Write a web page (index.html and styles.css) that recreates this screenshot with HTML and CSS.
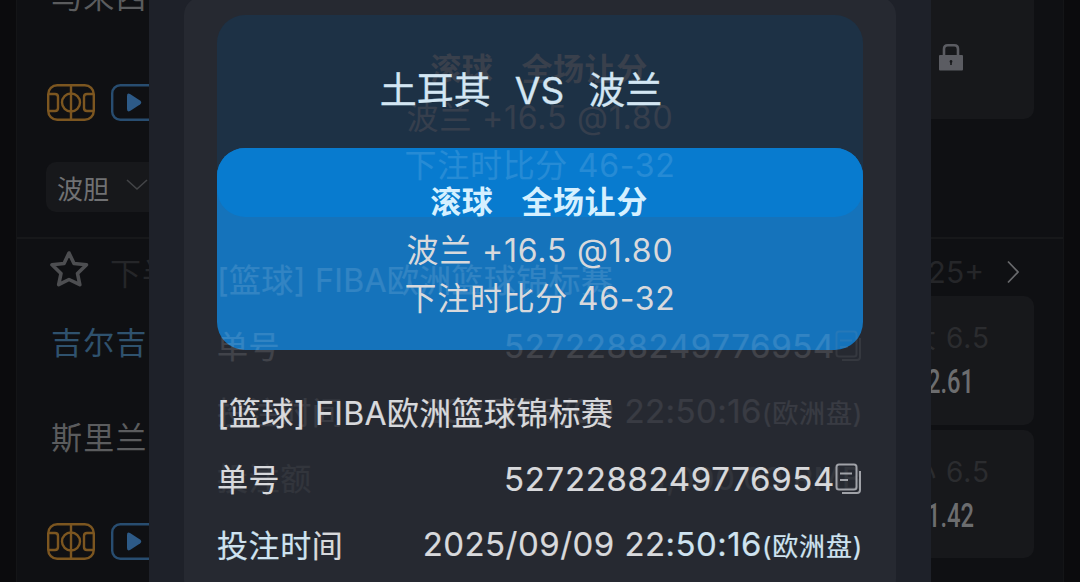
FILE: index.html
```html
<!DOCTYPE html>
<html lang="zh-CN">
<head>
    <meta charset="UTF-8">
    <title>注单详情</title>
    <link rel="stylesheet" href="styles.css">
</head>
<body>
    <svg width="0" height="0" class="defs">
        <symbol id="icon-pitch" viewBox="0 0 48 37">
            <rect x="1.2" y="1.2" width="45.6" height="34.6" rx="9"/>
            <path d="M24 1v35M1 10h7q3 0 3 3v11q0 3-3 3H1M47 10h-7q-3 0-3 3v11q0 3 3 3h7"/>
            <circle cx="24" cy="18.5" r="9"/>
        </symbol>
        <symbol id="icon-play" viewBox="0 0 48 37">
            <rect x="1.2" y="1.2" width="45.6" height="34.6" rx="8"/>
            <path class="solid" d="M16 12q0-3.5 3-2l10 6.500q2.500 2 0 4l-10 6.500q-3 1.500-3-2z"/>
        </symbol>
        <symbol id="icon-copy" viewBox="0 0 28 32">
            <rect x="1.5" y="1.5" width="20" height="25" rx="2.5"/>
            <path d="M5 10.5h12M5 17h8M25 8v19q0 3-3 3H7"/>
        </symbol>
    </svg>

    <div class="board">
        <div class="match first">
            <div class="left">
                <div class="team top">马来西</div>
                <div class="icons">
                    <svg class="pitch"><use href="#icon-pitch"/></svg>
                    <svg class="play"><use href="#icon-play"/></svg>
                </div>
                <div class="select">波胆
                    <svg width="22" height="12" viewBox="0 0 22 12"><path d="M1 1l10 9 10-9"/></svg>
                </div>
            </div>
            <div class="right">
                <div class="odds locked">
                    <svg class="lock" width="24" height="27" viewBox="0 0 24 27">
                        <path class="shackle" d="M5 12V5q0-3.7 3.7-3.7h6.6q3.7 0 3.7 3.7v7"/>
                        <rect y="11" width="24" height="15.5" rx="1"/>
                        <path class="hole" d="M12 16a1.5 1.5 0 0 1 .8 2.7v2.3h-1.6v-2.3a1.5 1.5 0 0 1 .8-2.7z"/>
                    </svg>
                </div>
            </div>
        </div>

        <div class="match">
            <div class="left">
                <div class="bar">
                    <svg class="star" width="42" height="38" viewBox="0 0 42 38"><path d="M21 4l5 10.5 12.500 1.300-9 8.700 2.300 11.200L21 30.500 10.700 35.700l2.300-11.200-9-8.700L16 14.500z"/></svg>
                    <span>下半</span>
                </div>
                <div class="team home">吉尔吉</div>
                <div class="team away">斯里兰</div>
                <div class="icons">
                    <svg class="pitch"><use href="#icon-pitch"/></svg>
                    <svg class="play"><use href="#icon-play"/></svg>
                </div>
            </div>
            <div class="right">
                <div class="bar more">25+
                    <svg width="12" height="24" viewBox="0 0 12 24"><path d="M1 1.5l10 10.5L1 22.5"/></svg>
                </div>
                <div class="odds">
                    <div class="line">大 6.5</div>
                    <div class="price">2.61</div>
                </div>
                <div class="odds">
                    <div class="line">小 6.5</div>
                    <div class="price">1.42</div>
                </div>
            </div>
        </div>
    </div>

    <div class="modal">
        <div class="panel">
            <!-- previous frame, fading out behind the ticket -->
            <div class="plate"></div>
            <div class="ticket">
                <div class="title"><span>土耳其</span><span class="vs">VS</span><span>波兰</span></div>
                <div class="card">
                    <div class="kind"><span>滚球</span><span>全场让分</span></div>
                    <div class="pick">波兰 +16.5 @1.80</div>
                    <div class="score">下注时比分 46-32</div>
                </div>
                <div class="row"><span class="league">[篮球] FIBA欧洲篮球锦标赛</span></div>
                <div class="row">
                    <span>单号</span>
                    <span class="value number">5272288249776954<svg class="copy"><use href="#icon-copy"/></svg></span>
                </div>
                <div class="row">
                    <span><span class="tint">投注时</span>间</span>
                    <span class="value time"><span>2025/09/09 22<span class="tint">:50:16<small>(欧洲盘)</small></span></span></span>
                </div>
            </div>
            <div class="ticket ghost">
                <div class="card">
                    <div class="kind"><span>滚球</span><span>全场让分</span></div>
                    <div class="pick">波兰 +16.5 @1.80</div>
                    <div class="score">下注时比分 46-32</div>
                </div>
                <div class="row"><span class="league">[篮球] FIBA欧洲篮球锦标赛</span></div>
                <div class="row">
                    <span>单号</span>
                    <span class="value number">5272288249776954<svg class="copy"><use href="#icon-copy"/></svg></span>
                </div>
                <div class="row faint">
                    <span>投注时间</span>
                    <span class="value time"><span>2025/09/09 22:50:16<small>(欧洲盘)</small></span></span>
                </div>
                <div class="row fainter">
                    <span>投注额</span>
                    <span class="value amount">1,000.00 RMB</span>
                </div>
            </div>
        </div>
    </div>
</body>
</html>
```

FILE: styles.css
```css
* {
    box-sizing: border-box;
}
body {
    margin: 0;
    height: 582px;
    position: relative;
    overflow: hidden;
    background-color: #0b0b0d;
    font-family: Inter, "Noto Sans CJK SC", sans-serif;
    white-space: nowrap;
}
svg {
    fill: none;
    flex-shrink: 0;
}
.defs {
    position: absolute;
}

/* match list */
.board {
    height: 582px;
    margin: 0 16px;
    border: solid #141517;
    border-width: 0 1px;
    background-color: #0f1013;
    overflow: hidden;
}
.match {
    display: flex;
    justify-content: space-between;
    padding: 0 29px;
}
.first {
    height: 239px;
    border-bottom: 2px solid #17181a;
}
.left {
    width: 240px;
}
.right {
    width: 150px;
}
.team {
    margin-left: 5px;
    font-size: 31px;
    line-height: 40px;
    letter-spacing: 1.2px;
    color: #5b5c5e;
}
.top {
    margin-top: -23px;
}
.home {
    margin-top: 19px;
    color: #2f526e;
}
.away {
    margin-top: 55px;
}
.icons {
    display: flex;
    gap: 16px;
    margin: 65px 0 0 1px;
}
.top + .icons {
    margin-top: 67px;
}
.icons svg {
    width: 48px;
    height: 37px;
    stroke-width: 2.4;
}
.pitch {
    stroke: #7c5620;
}
.play {
    stroke: #284d70;
}
.solid {
    fill: #2d5a87;
    stroke: none;
}
.select {
    display: flex;
    align-items: center;
    gap: 17px;
    height: 50px;
    margin-top: 41px;
    padding: 1px 11px 0;
    border-radius: 10px;
    background-color: #17181b;
    color: #707173;
    font-size: 26px;
}
.select svg {
    margin-top: -5px;
    stroke: #434447;
    stroke-width: 1.6;
}
.bar {
    display: flex;
    align-items: center;
    gap: 20px;
    height: 65px;
    padding-left: 2px;
    font-size: 31px;
    color: #252629;
}
.bar span {
    letter-spacing: 1px;
}
.star {
    margin-top: -8px;
    stroke: #4d4e51;
    stroke-width: 3.6;
    stroke-linejoin: round;
}
.more {
    justify-content: flex-end;
    gap: 23px;
    padding-right: 15px;
    font-size: 30px;
}
.more svg {
    stroke: #68696c;
    stroke-width: 1.8;
}
.odds {
    height: 128px;
    margin-bottom: 5px;
    padding: 20px 44px 0 0;
    border-radius: 10px;
    background-color: #17181b;
    text-align: right;
}
.more + .odds {
    height: 129px;
    margin-top: -8px;
}
.locked {
    height: 139px;
    margin-top: -20px;
    padding: 64px 71px 0 0;
}
.lock {
    fill: #5b5c62;
}
.shackle {
    fill: none;
    stroke: #5b5c62;
    stroke-width: 2.6;
}
.hole {
    fill: #17181b;
}
.line {
    font-size: 28px;
    line-height: 44px;
    letter-spacing: 1px;
    color: #2b2c2f;
}
.price {
    margin-right: 16px;
    font: 500 33px/44px Roboto, sans-serif;
    color: #6c6d6f;
    transform: scaleX(0.72);
    transform-origin: right;
}

/* ticket dialog */
.modal {
    position: absolute;
    top: 0;
    left: 149px;
    width: 782px;
    height: 582px;
    padding: 0 35px;
    background-color: #1e2129;
}
.panel {
    position: relative;
    height: 600px;
    margin-top: -3px;
    padding: 18px 33px 0;
    border-radius: 18px;
    background-color: #262931;
}
.plate {
    position: absolute;
    top: 18px;
    left: 33px;
    right: 33px;
    height: 202px;
    border-radius: 28px;
    background-color: #1d3145;
}
.ticket {
    color: #d8d9dc;
    font-size: 31px;
    letter-spacing: 0.6px;
}
.title {
    position: relative;
    z-index: 2;
    display: flex;
    justify-content: center;
    gap: 24px;
    height: 133px;
    padding: 17px 38px 0 0;
    line-height: 118px;
    font-size: 37px;
    letter-spacing: 0;
    color: #d3e6f3;
    -webkit-text-stroke: 0.3px;
}
.card {
    position: relative;
    height: 202px;
    margin-bottom: 30px;
    padding-top: 30px;
    border-radius: 28px;
    background-color: #1573bb;
    text-align: center;
    line-height: 48.7px;
}
.card::before {
    content: "";
    position: absolute;
    inset: 0 0 auto;
    height: 69px;
    border-radius: 28px;
    background-color: #087bcf;
}
.card > div {
    position: relative;
    z-index: 2;
}
.kind {
    display: flex;
    justify-content: center;
    gap: 28px;
    padding-right: 2px;
    font-weight: bold;
    letter-spacing: 0.6px;
    color: #d5f0ff;
}
.pick {
    font-size: 32px;
    letter-spacing: 0.8px;
}
.score {
    font-size: 32px;
    letter-spacing: 0.7px;
}
.row {
    position: relative;
    z-index: 2;
    display: flex;
    justify-content: space-between;
    height: 66px;
    line-height: 67px;
    -webkit-text-stroke: 0.2px;
}
.league {
    font-size: 32px;
    letter-spacing: 0.33px;
}
.value {
    display: flex;
    align-items: center;
}
.number {
    font-size: 33px;
    letter-spacing: 0.65px;
}
.time {
    font-size: 33px;
    letter-spacing: 0.45px;
}
.copy {
    width: 28px;
    height: 32px;
    margin-left: 0;
    stroke: #a0a2a8;
    stroke-width: 2;
}
.tint {
    color: #cfe3f0;
}
small {
    font-size: 26px;
    letter-spacing: 0.8px;
}

/* same ticket one step higher, nearly transparent */
.ghost {
    position: absolute;
    z-index: 1;
    top: 18px;
    left: 33px;
    right: 33px;
    color: #fff;
    opacity: 0.12;
}
.ghost .card {
    background: none;
    color: #e8a28c;
}
.ghost .card::before {
    display: none;
}
.ghost .kind {
    color: #ffac84;
}
.ghost .score {
    color: #fff;
}
.faint {
    opacity: 0.7;
}
.fainter {
    opacity: 0.45;
}
```
